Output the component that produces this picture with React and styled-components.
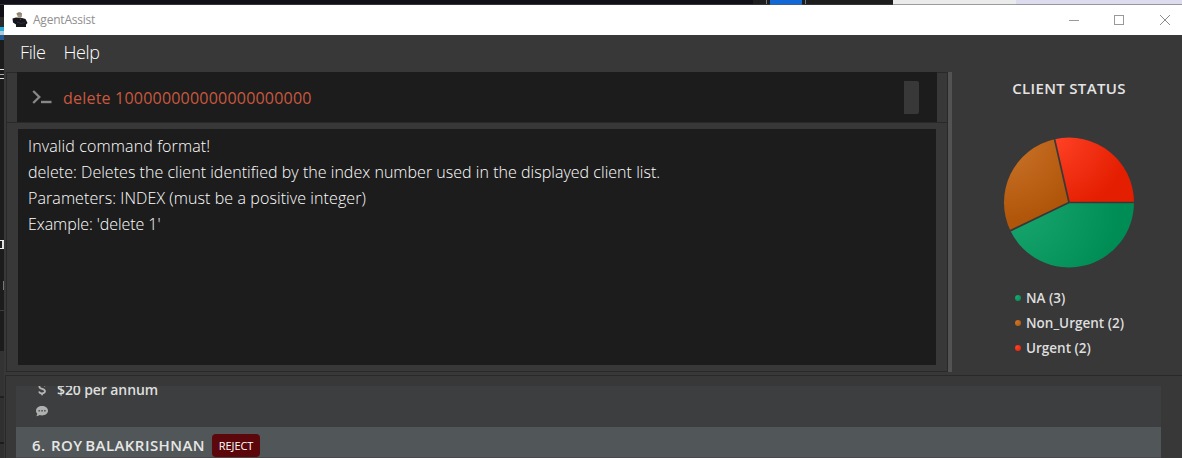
import React from "react";
import styled, { createGlobalStyle } from "styled-components";

const Global = createGlobalStyle`
  * { box-sizing: border-box; }
  html, body { margin: 0; padding: 0; overflow: hidden; background: #1c1c1c; }
`;

const Desktop = styled.div`
  width: 1182px;
  height: 458px;
  display: flex;
  flex-direction: column;
  overflow: hidden;
  background: #1c1c1c;
  font-family: "Open Sans", "Noto Sans", sans-serif;
`;

const DesktopTop = styled.div`
  height: 5px;
  flex: none;
  display: flex;
`;

const Swatch = styled.div`
  width: ${(p) => p.$w}px;
  background: ${(p) => p.$c};
  border-bottom: 1px solid ${(p) => p.$edge || "#35343a"};
`;

const DesktopBody = styled.div`
  flex: 1;
  display: flex;
  min-height: 0;
`;

const DesktopLeft = styled.div`
  width: 4px;
  flex: none;
  display: flex;
  flex-direction: column;
`;

const Band = styled.div`
  height: ${(p) => p.$h}px;
  flex: none;
  margin-left: ${(p) => p.$inset || 0}px;
  background: ${(p) => p.$c};
`;

const Window = styled.div`
  flex: 1;
  min-width: 0;
  display: flex;
  flex-direction: column;
  background: #383838;
`;

const TitleBar = styled.header`
  height: 30px;
  flex: none;
  display: flex;
  align-items: center;
  background: #fff;
  padding-left: 8px;
`;

const Title = styled.span`
  flex: 1;
  margin-left: 5px;
  font-size: 12px;
  line-height: 30px;
  letter-spacing: -0.22px;
  color: #8f8f8f;
`;

const Controls = styled.div`
  display: flex;
  gap: 35px;
  padding-right: 12px;
  svg { display: block; }
  svg:last-child { margin-left: 1px; }
`;

const MenuBar = styled.nav`
  height: 37px;
  flex: none;
  display: flex;
  gap: 18px;
  padding-left: 16px;
`;

const MenuItem = styled.span`
  font-size: 18px;
  font-weight: 300;
  line-height: 35px;
  letter-spacing: -0.4px;
  color: #ffffff;
`;

const Upper = styled.div`
  height: 300px;
  flex: none;
  display: flex;
  padding-left: 2px;
`;

const Console = styled.div`
  width: 942px;
  display: flex;
  flex-direction: column;
  border: solid #292929;
  border-width: 0 1px 1px 1px;
`;

const CommandPane = styled.div`
  height: 51px;
  flex: none;
  padding: 0 10px 0 10px;
  border-top: 1px solid #292929;
  border-bottom: 1px solid #292929;
`;

const CommandField = styled.div`
  height: 50px;
  margin-top: -1px;
  display: flex;
  align-items: center;
  padding: 0 18px 0 15px;
  background: #1c1c1c;
`;

const CommandText = styled.span`
  flex: 1;
  margin-left: 11px;
  margin-top: 2px;
  font-size: 16px;
  font-weight: 400;
  letter-spacing: 0.21px;
  color: #c9583f;
`;

const FieldThumb = styled.div`
  width: 15px;
  height: 33px;
  background: #383838;
  border-radius: 0 2px 2px 0;
`;

const ResultBox = styled.div`
  margin: 6px 11px 6px;
  flex: 1;
  padding: 4px 10px;
  background: #1c1c1c;
`;

const ResultLine = styled.div`
  font-size: 16px;
  font-weight: 300;
  line-height: 26px;
  white-space: nowrap;
  letter-spacing: ${(p) => p.$track}px;
  color: #fff;
`;

const Divider = styled.div`
  width: 4px;
  background: #535353;
`;

const StatusPanel = styled.aside`
  flex: 1;
  display: flex;
  flex-direction: column;
  align-items: center;
  padding-left: 4px;
`;

const StatusTitle = styled.h2`
  margin: 6px 0 0;
  height: 58px;
  font-size: 15px;
  font-weight: 600;
  line-height: 21px;
  letter-spacing: 0.33px;
  white-space: nowrap;
  color: #e4e4e4;
`;

const Pie = styled.svg`
  display: block;
  flex: none;
`;

const Legend = styled.ul`
  list-style: none;
  width: 110px;
  margin: 17px 0 0;
  padding: 0;
`;

const LegendItem = styled.li`
  height: 25px;
  display: flex;
  align-items: center;
  gap: 5px;
  font-size: 13.5px;
  font-weight: 600;
  white-space: nowrap;
  color: #dedede;
`;

const Dot = styled.i`
  width: 6px;
  height: 6px;
  margin-left: 1px;
  border-radius: 50%;
  background: ${(p) => p.$fill};
`;

const ListPane = styled.section`
  flex: 1;
  margin: 3px 0 0 1px;
  padding: 10px 21px 0 10px;
  border: solid #292929;
  border-width: 1px 0 0 1px;
`;

const DetailCard = styled.div`
  height: 41px;
  overflow: hidden;
  background: #3c3e3f;
  display: flex;
  flex-direction: column;
  padding-left: 20px;
`;

const DetailRow = styled.div`
  height: 22px;
  flex: none;
  display: flex;
  align-items: center;
  margin-top: ${(p) => p.$shift || 0}px;
  svg { display: block; flex: none; }
`;

const DetailText = styled.span`
  margin-left: 9px;
  font-size: 14px;
  font-weight: 600;
  letter-spacing: -0.1px;
  color: #dedede;
`;

const ClientCard = styled.div`
  height: 31px;
  display: flex;
  align-items: flex-start;
  background: #515658;
  padding: 7px 0 0 16px;
  border-bottom: 1px solid #4b464a;
`;

const ClientName = styled.span`
  width: 174px;
  font-size: 15px;
  font-weight: 600;
  line-height: 23px;
  letter-spacing: 0.43px;
  word-spacing: -1.6px;
  white-space: pre;
  color: #e6e6e6;
`;

const Tag = styled.span`
  margin-left: 6px;
  width: 48px;
  height: 23px;
  border-radius: 4px;
  background: #5c070b;
  color: #fff;
  font-size: 11px;
  line-height: 23px;
  letter-spacing: -0.05px;
  text-align: center;
`;

const CX = 66;
const CY = 66;
const R = 65;

const slices = [
  { id: "na", label: "NA (3)", value: 3, light: "#1aa871", dark: "#008c55", origin: [7, 66], reach: 110 },
  { id: "non", label: "Non_Urgent (2)", value: 2, light: "#cc752c", dark: "#b0560a", origin: [1, 3], reach: 82 },
  { id: "urgent", label: "Urgent (2)", value: 2, light: "#ff4226", dark: "#e41e00", origin: [51, 1], reach: 76 },
];

function slicePath(from, to) {
  const point = (t) => {
    const a = t * Math.PI * 2;
    return `${CX + R * Math.cos(a)} ${CY + R * Math.sin(a)}`;
  };
  return `M${CX} ${CY} L${point(from)} A${R} ${R} 0 0 1 ${point(to)} Z`;
}

function StatusPie() {
  const total = slices.reduce((n, s) => n + s.value, 0);
  let start = 0;
  return (
    <Pie width="132" height="132" viewBox="0 -0.5 132 132">
      {slices.map((s) => {
        const from = start / total;
        start += s.value;
        return (
          <g key={s.id}>
            <radialGradient id={s.id} gradientUnits="userSpaceOnUse" cx={s.origin[0]} cy={s.origin[1]} r={s.reach}>
              <stop offset="0" stopColor={s.light} />
              <stop offset="1" stopColor={s.dark} />
            </radialGradient>
            <path d={slicePath(from, start / total)} fill={`url(#${s.id})`} />
          </g>
        );
      })}
      {[0, 3 / 7, 5 / 7].map((t) => (
        <line
          key={t}
          x1={CX}
          y1={CY}
          x2={CX + (R + 1) * Math.cos(t * Math.PI * 2)}
          y2={CY + (R + 1) * Math.sin(t * Math.PI * 2)}
          stroke="#383838"
          strokeWidth="1.7"
        />
      ))}
    </Pie>
  );
}

function AppIcon() {
  return (
    <svg width="16" height="16" viewBox="0 0 16 16">
      <path d="M0.5 6.5 L4 5.5 L10 6 L13.5 7 L15.5 11 L14 12.5 L14 15 L4 15 L4 12.5 L1 10.5 Z" fill="#17171b" />
      <path d="M4.5 1.5 Q7.5 -0.8 10 1.5 L10 4.5 L8.5 6 L6 5.6 Z" fill="#a8947f" />
      <path d="M4.5 1.8 Q7.5 -0.8 10 1.6 L9.5 2.6 L5.2 3 Z" fill="#8e8577" />
      <path d="M6.5 6 L8 7.2 L9.5 6 L8.6 8 Z" fill="#5d6b80" />
      <path d="M5 10 L9 11.5 L13 10.5" stroke="#2c2d36" fill="none" />
    </svg>
  );
}

function DetailIconDollar() {
  return (
    <svg width="12" height="14" viewBox="0 0 12 14">
      <path
        d="M9 4.3 C8.6 3 7.4 2.6 6.1 2.6 C4.4 2.6 3.4 3.5 3.4 4.7 C3.4 7.5 9 6.1 9 9.1 C9 10.6 7.7 11.3 6.2 11.3 C4.6 11.3 3.4 10.7 3 9.4 M6.1 0.8 V2.6 M6.1 11.3 V13.2"
        stroke="#b4b4b4"
        strokeWidth="1.8"
        fill="none"
      />
    </svg>
  );
}

function DetailIconComment() {
  return (
    <svg width="12" height="12" viewBox="0 0 12 12">
      <path d="M6 1 C9.3 1 12 3 12 5.7 C12 8.4 9.3 10.4 6 10.4 C5.1 10.4 4.3 10.3 3.6 10 C2.7 10.7 1.5 11.2 0.2 11.2 C0.9 10.4 1.2 9.5 1.3 8.7 C0.5 7.9 0 6.9 0 5.7 C0 3 2.7 1 6 1 Z" fill="#b0b0b0" />
      <rect x="2.4" y="5" width="1.7" height="1.5" fill="#55585a" />
      <rect x="5.2" y="5" width="1.7" height="1.5" fill="#55585a" />
      <rect x="8" y="5" width="1.7" height="1.5" fill="#55585a" />
    </svg>
  );
}

export default function App() {
  return (
    <Desktop>
      <Global />
      <DesktopTop>
        <Swatch $w={753} $c="#110f17" />
        <Swatch $w={13} $c="#1d1d1d" />
        <Swatch $w={1} $c="#777777" />
        <Swatch $w={3} $c="#1d1d1d" />
        <Swatch $w={32} $c="#1269d6" $edge="#3f5f94" />
        <Swatch $w={3} $c="#1d1d1d" />
        <Swatch $w={1} $c="#777777" />
        <Swatch $w={87} $c="#1d1d1d" />
        <Swatch $w={123} $c="#ebebeb" $edge="#9c9c9c" />
        <Swatch $w={166} $c="#dcdcee" $edge="#96969f" />
      </DesktopTop>
      <DesktopBody>
        <DesktopLeft>
          <Band $h={12} $c="#100f16" />
          <Band $h={10} $c="#2a2a2a" />
          <Band $h={4} $c="#24a9dc" />
          <Band $h={4} $c="#b5c9d4" />
          <Band $h={5} $c="#235b96" />
          <Band $h={29} $c="#1c1c1c" />
          <Band $h={1} $c="#e0e0e0" />
          <Band $h={4} $c="#1c1c1c" />
          <Band $h={1} $c="#a8a8a8" />
          <Band $h={3} $c="#1c1c1c" />
          <Band $h={1} $c="#e0e0e0" />
          <Band $h={161} $c="#1c1c1c" />
          <Band $h={1} $c="#f0f0f0" />
          <Band $h={7} $c="#e0e0e0" $inset={2} />
          <Band $h={1} $c="#f0f0f0" />
          <Band $h={32} $c="#1c1c1c" />
          <Band $h={9} $c="#777777" $inset={3} />
          <Band $h={20} $c="#1c1c1c" />
          <Band $h={1} $c="#3c3c3c" />
          <Band $h={40} $c="#1c1c1c" />
          <Band $h={45} $c="#333333" />
          <Band $h={2} $c="#202020" />
          <Band $h={44} $c="#303030" />
          <Band $h={2} $c="#1c1c1c" />
          <Band $h={20} $c="#303030" />
        </DesktopLeft>
        <Window>
          <TitleBar>
            <AppIcon />
            <Title>AgentAssist</Title>
            <Controls>
              <svg width="10" height="10" viewBox="0 0 10 10"><path d="M0 5.5 H10" stroke="#999" /></svg>
              <svg width="10" height="10" viewBox="0 0 10 10"><rect x="0.5" y="0.5" width="9" height="9" fill="none" stroke="#999" /></svg>
              <svg width="10" height="10" viewBox="0 0 10 10"><path d="M0 0 L10 10 M10 0 L0 10" stroke="#8c8c8c" /></svg>
            </Controls>
          </TitleBar>
          <MenuBar>
            <MenuItem>File</MenuItem>
            <MenuItem>Help</MenuItem>
          </MenuBar>
          <Upper>
            <Console>
              <CommandPane>
                <CommandField>
                  <svg width="20" height="14" viewBox="0 0 20 14">
                    <path d="M1.2 1 L7.3 7 L1.2 13" stroke="#888" strokeWidth="2.3" fill="none" />
                    <path d="M9 12 H19.5" stroke="#888" strokeWidth="2.4" />
                  </svg>
                  <CommandText>delete 100000000000000000000</CommandText>
                  <FieldThumb />
                </CommandField>
              </CommandPane>
              <ResultBox>
                <ResultLine $track={0.13}>Invalid command format!</ResultLine>
                <ResultLine $track={0.03}>delete: Deletes the client identified by the index number used in the displayed client list.</ResultLine>
                <ResultLine $track={0.09}>Parameters: INDEX (must be a positive integer)</ResultLine>
                <ResultLine $track={-0.06}>Example: 'delete 1'</ResultLine>
              </ResultBox>
            </Console>
            <Divider />
            <StatusPanel>
              <StatusTitle>CLIENT STATUS</StatusTitle>
              <StatusPie />
              <Legend>
                {slices.map((s) => (
                  <LegendItem key={s.id}>
                    <Dot $fill={`radial-gradient(circle at 30% 30%, ${s.light}, ${s.dark})`} />
                    {s.label}
                  </LegendItem>
                ))}
              </Legend>
            </StatusPanel>
          </Upper>
          <ListPane>
            <DetailCard>
              <DetailRow $shift={-8}>
                <DetailIconDollar />
                <DetailText>$20 per annum</DetailText>
              </DetailRow>
              <DetailRow>
                <DetailIconComment />
              </DetailRow>
            </DetailCard>
            <ClientCard>
              <ClientName>6.  ROY BALAKRISHNAN</ClientName>
              <Tag>REJECT</Tag>
            </ClientCard>
          </ListPane>
        </Window>
      </DesktopBody>
    </Desktop>
  );
}
